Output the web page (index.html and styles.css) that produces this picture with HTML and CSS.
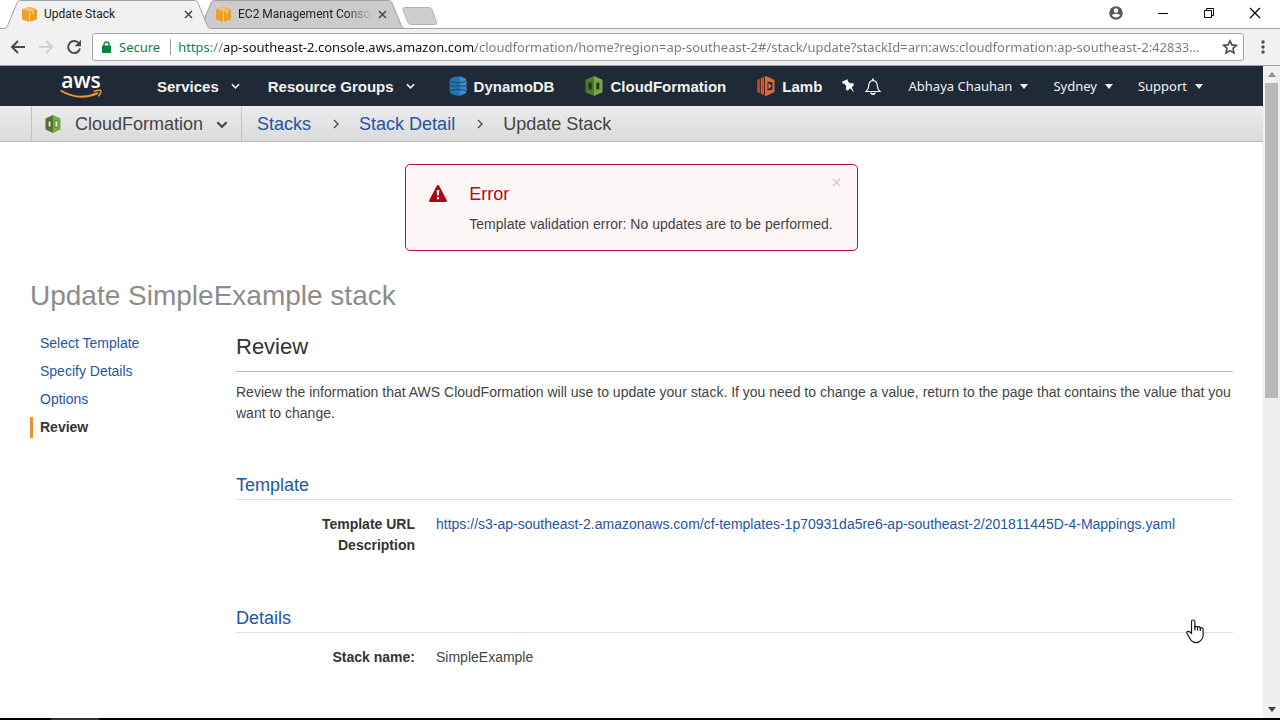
FILE: index.html
```html
<!DOCTYPE html>
<html lang="en">
<head>
<meta charset="utf-8">
<title>Update Stack</title>
<link rel="stylesheet" href="styles.css">
</head>
<body>
<svg class="defs" aria-hidden="true">
  <symbol id="cube" viewBox="0 0 15 15">
    <path d="M0 2.400 7.500 0 15 2.400v10L7.500 15 0 12.400z" fill="#eba028"/>
    <path d="M0 2.400 7.500 0 15 2.400 7.500 5z" fill="#f5b653"/>
    <path d="M7 5v10h1V5z" fill="#fbd48e"/>
    <path d="M3.500 1.300 11 4v3" fill="none" stroke="#fbd89c" stroke-width="1"/>
  </symbol>
  <symbol id="cross" viewBox="0 0 9 9"><path d="M1 1l7 7M8 1 1 8" fill="none" stroke="currentColor" stroke-width="1.600"/></symbol>
  <symbol id="chevron" viewBox="0 0 10 6"><path d="M1 1l4 4 4-4" fill="none" stroke="currentColor" stroke-width="1.800"/></symbol>
  <symbol id="caret" viewBox="0 0 8 5"><path d="M0 0h8L4 5z" fill="currentColor"/></symbol>
  <symbol id="stack" viewBox="0 0 18 20">
    <path d="M9 0 .5 3.800v12.400L9 20z" fill="#4f7a30"/>
    <path d="M9 0l8.500 3.800v12.400L9 20z" fill="#7aa845"/>
    <path d="M2.800 6.200 7.300 5.600v8.800l-4.500-.600z" fill="#3d5f28"/>
    <path d="M4 7.300 6.300 7v6L4 12.700z" fill="var(--hole)"/>
    <path d="M10.700 5.600l4.500.6v7.600l-4.500.6z" fill="#5c8a38"/>
    <path d="M11.700 7l2.300.300v5.400l-2.300.300z" fill="var(--hole)"/>
  </symbol>
</svg>

<div class="browser">
  <div class="tabstrip">
    <div class="tabs">
      <div class="tab tab-active">
        <svg class="tab-shape" viewBox="0 0 206 29"><path d="M0 28.500Q1.500 28.500 2.500 26L12 3q1-2.500 3.500-2.500h174q2.500 0 3.500 2.500l9.500 23q1 2.500 3.500 2.500V29H0z" fill="#f1f1f1"/><path d="M0 28.500Q1.500 28.500 2.500 26L12 3q1-2.500 3.500-2.500h174q2.500 0 3.500 2.500l9.500 23q1 2.500 3.500 2.500" fill="none" stroke="#a0a0a0"/></svg>
        <svg class="favicon"><use href="#cube"/></svg>
        <a class="tab-title" href="#">Update Stack</a>
        <button class="tab-close" aria-label="Close tab"><svg class="x"><use href="#cross"/></svg></button>
      </div>
      <div class="tab">
        <svg class="tab-shape" viewBox="0 0 206 29"><path d="M0 28.500Q1.500 28.500 2.500 26L12 3q1-2.500 3.500-2.500h174q2.500 0 3.500 2.500l9.500 23q1 2.500 3.500 2.500z" fill="#cbcbcb" stroke="#a0a0a0"/></svg>
        <svg class="favicon"><use href="#cube"/></svg>
        <a class="tab-title fade" href="#">EC2 Management Conso</a>
        <button class="tab-close" aria-label="Close tab"><svg class="x"><use href="#cross"/></svg></button>
      </div>
      <button class="new-tab" aria-label="New tab"><svg viewBox="0 0 35 18"><path d="M3 .5h24q2 0 3 2l4.500 12.500q.5 2.500-2 2.500H9q-2 0-3-2L1 3Q.5.500 3 .500z" fill="#cdcdcd" stroke="#b2b2b2"/></svg></button>
    </div>
    <div class="window-buttons">
      <button aria-label="Profile"><svg class="i14" viewBox="0 0 14 14"><circle cx="7" cy="7" r="6.800" fill="#5a5a5a"/><circle cx="7" cy="4.500" r="2.200" fill="#fff"/><path d="M2.800 9Q7 6.300 11.200 9 9.800 11.600 7 11.600T2.800 9z" fill="#fff"/></svg></button>
      <button aria-label="Minimize"><svg class="i12" viewBox="0 0 12 12"><path d="M1 6.500h10" stroke="#000"/></svg></button>
      <button aria-label="Restore"><svg class="i12" viewBox="0 0 12 12"><path d="M1.500 3.500h7v7h-7zM3.500 3V1.500h7v7H9" fill="none" stroke="#000"/></svg></button>
      <button aria-label="Close window"><svg class="i12" viewBox="0 0 12 12"><path d="M1 1l10 10M11 1 1 11" stroke="#000" stroke-width="1.200"/></svg></button>
    </div>
  </div>

  <div class="toolbar">
    <div class="history">
      <button aria-label="Back"><svg class="i16" viewBox="0 0 16 16"><path d="M15 8H2.500M8 2 2 8l6 6" fill="none" stroke="#4a4a4a" stroke-width="2"/></svg></button>
      <button aria-label="Forward"><svg class="i16" viewBox="0 0 16 16"><path d="M1 8h12.500M8 2l6 6-6 6" fill="none" stroke="#d0d0d0" stroke-width="2"/></svg></button>
      <button aria-label="Reload"><svg class="i16" viewBox="0 0 16 16"><path d="M13 4.500A6 6 0 1 0 14 9.500" fill="none" stroke="#4a4a4a" stroke-width="2"/><path d="M15 .8v6.400H8.600z" fill="#4a4a4a"/></svg></button>
    </div>
    <div class="omnibox">
      <svg class="lock" viewBox="0 0 9 12"><path d="M0 4.500h9V12H0z" fill="#0b8043"/><path d="M2 5V3.500a2.500 2.500 0 0 1 5 0V5" fill="none" stroke="#0b8043" stroke-width="1.400"/></svg>
      <span class="secure">Secure</span>
      <input class="url" type="text" aria-label="Address" value="https://ap-southeast-2.console.aws.amazon.com/cloudformation/home?region=ap-southeast-2#/stack/update?stackId=arn:aws:cloudformation:ap-southeast-2:42833...">
      <button aria-label="Bookmark"><svg class="i16" viewBox="0 0 16 16"><path d="M8 1.800l1.900 4.100 4.500.500-3.400 3 1 4.500L8 11.600l-4 2.300 1-4.500-3.400-3 4.500-.500z" fill="none" stroke="#4a4a4a" stroke-width="1.600"/></svg></button>
    </div>
    <button class="menu" aria-label="Menu"><svg viewBox="0 0 4 14"><circle cx="2" cy="2" r="1.700"/><circle cx="2" cy="7" r="1.700"/><circle cx="2" cy="12" r="1.700"/></svg></button>
  </div>

  <div class="viewport">
    <div class="page">
      <header class="nav">
        <a class="logo" href="#" aria-label="AWS home"><span class="logo-text">aws</span><svg class="smile" viewBox="0 0 42 11"><path d="M.5 1.500Q19 12.500 38 4" fill="none" stroke="#f29432" stroke-width="2"/><path d="M33.500 2.500Q39 .8 40.500 1.500T38.500 7.500" fill="none" stroke="#f29432" stroke-width="1.500"/></svg></a>
        <button class="nav-main services">Services <svg class="chev"><use href="#chevron"/></svg></button>
        <button class="nav-main groups">Resource Groups <svg class="chev"><use href="#chevron"/></svg></button>
        <div class="shortcuts">
          <a class="shortcut" href="#"><svg class="service" viewBox="0 0 18 20"><path d="M1 3Q9-2.500 17 3v1.500q1.500 1.500 0 3.500 1 2 0 4 1.500 2 0 3.500V17Q9 22.500 1 17v-1.500q-1.500-1.500 0-3.500-1-2 0-4-1.500-2 0-3.500z" fill="#2673b5"/><path d="M11 .200 17 3v1.500q1.500 1.500 0 3.500 1 2 0 4 1.500 2 0 3.500V17l-6 2.800z" fill="#3f8ccb"/><path d="M1 5.500q8 2.500 16 0M1 10h16M1 14.500q8-2.500 16 0" fill="none" stroke="#194668" stroke-width="1"/></svg>DynamoDB</a>
          <a class="shortcut" href="#"><svg class="service"><use href="#stack"/></svg>CloudFormation</a>
          <a class="shortcut" href="#"><svg class="service" viewBox="0 0 18 20"><path d="M9 0l8.500 4v12L9 20 .5 16V4z" fill="#dd6b37"/><path d="M.5 4 3 2.800v14.400L.5 16zM5 2l1.500-.700v17.400L5 18z" fill="#b8491f"/><path d="M3.500 2.600v14.800M7.500.800v18.400" stroke="#4a2a26"/><path d="M10.500 5.500l5 1v7l-5 1z" fill="#1f2a36"/><path d="M11.500 7l3 3-3 3z" fill="#f08350"/></svg>Lamb</a>
        </div>
        <div class="nav-tools">
          <button aria-label="Pin shortcuts"><svg class="i14" viewBox="0 0 14 14"><path d="M3.500 1.500 6.500.2l.8 2.800 2.700 1.500 2.400-.5.400 2.400-2.100 1.600L13 13.500l-4-4.200-2.400 2.400L4.800 10.200l.4-3.300L3.600 5 1.600 4.500 1 2.700z" fill="#fff"/></svg></button>
          <button aria-label="Notifications"><svg class="bell" viewBox="0 0 16 17"><path d="M1 13.500q2.500-2 2.700-5.500Q3.700 3 8 2.500 12.300 3 12.300 8q.2 3.500 2.700 5.500z" fill="none" stroke="#fff" stroke-width="1.200"/><path d="M8 2.500V.5M6 14.500a2 1.600 0 0 0 4 0" fill="none" stroke="#fff" stroke-width="1.600"/></svg></button>
        </div>
        <nav class="account">
          <button>Abhaya Chauhan <svg class="caret"><use href="#caret"/></svg></button>
          <button>Sydney <svg class="caret"><use href="#caret"/></svg></button>
          <button>Support <svg class="caret"><use href="#caret"/></svg></button>
        </nav>
      </header>

      <nav class="crumbs" aria-label="Breadcrumb">
        <button class="service-menu"><svg class="service-small"><use href="#stack"/></svg>CloudFormation <svg class="chev-large"><use href="#chevron"/></svg></button>
        <a href="#">Stacks</a>
        <svg class="sep" viewBox="0 0 6 10"><path d="M1 1l4 4-4 4" fill="none" stroke="#444" stroke-width="1.300"/></svg>
        <a href="#">Stack Detail</a>
        <svg class="sep" viewBox="0 0 6 10"><path d="M1 1l4 4-4 4" fill="none" stroke="#444" stroke-width="1.300"/></svg>
        <span>Update Stack</span>
      </nav>

      <section class="alert" role="alert">
        <svg class="warning" viewBox="0 0 18 17"><path d="M9 0q.8 0 1.200.8l7.600 14.400q.6 1.800-1.300 1.800h-15Q-.4 17 .2 15.200L7.800.800Q8.200 0 9 0z" fill="#b10610"/><path d="M7.700 5h2.600l-.4 5.500H8.100zM7.900 12h2.200v2.200H7.900z" fill="#fff"/></svg>
        <div class="alert-body">
          <h2>Error</h2>
          <p>Template validation error: No updates are to be performed.</p>
        </div>
        <button class="dismiss" aria-label="Dismiss"><svg class="x"><use href="#cross"/></svg></button>
      </section>

      <main class="content">
        <h1>Update SimpleExample stack</h1>
        <div class="columns">
          <nav class="steps" aria-label="Steps">
            <a href="#">Select Template</a>
            <a href="#">Specify Details</a>
            <a href="#">Options</a>
            <span class="current">Review</span>
          </nav>
          <div class="review">
            <h2>Review</h2>
            <p>Review the information that AWS CloudFormation will use to update your stack. If you need to change a value, return to the page that contains the value that you want to change.</p>
            <section>
              <h3>Template</h3>
              <dl>
                <dt>Template URL</dt><dd><a href="#">https://s3-ap-southeast-2.amazonaws.com/cf-templates-1p70931da5re6-ap-southeast-2/201811445D-4-Mappings.yaml</a></dd>
                <dt>Description</dt><dd></dd>
              </dl>
            </section>
            <section>
              <h3>Details</h3>
              <dl><dt>Stack name:</dt><dd>SimpleExample</dd></dl>
            </section>
          </div>
        </div>
      </main>
    </div>
    <div class="scrollbar">
      <svg class="caret up"><use href="#caret"/></svg>
      <div class="track"><div class="thumb"></div></div>
      <svg class="caret down"><use href="#caret"/></svg>
    </div>
  </div>
  <div class="taskbar"><div class="taskbar-item"></div></div>
</div>
<svg class="pointer" viewBox="0 0 18 25"><path d="M5.500 13V3q0-2 1.700-2t1.700 2v5q1-1.200 2.700 0 1.500-.8 2.500.6 2.700-.4 3 1.600v6q0 3-2 5-1.800 2.500-5 2.500-3.500 0-5.600-3.200L1 14.200q-.6-1.800 1.200-1.900 1.500 0 3.300 2z" fill="#fff" stroke="#1c1824" stroke-width="1.200"/><path d="M8.900 7v4.500M11.600 8v3.500M14.300 9v3" stroke="#1c1824" stroke-width="1.200"/></svg>
</body>
</html>
```

FILE: styles.css
```css
* { box-sizing: border-box; }
body {
  margin: 0;
  font-family: "Liberation Sans", Arial, sans-serif;
  font-size: 14px;
  line-height: 21px;
  color: #444;
  background: #fff;
}
h1, h2, h3, p, dl, dd { margin: 0; font-weight: normal; }
a { color: #1f55a5; text-decoration: none; }
button {
  display: flex;
  align-items: center;
  padding: 0;
  border: 0;
  background: none;
  color: inherit;
  font: inherit;
  white-space: nowrap;
}
svg { display: block; flex: none; }
.defs { position: absolute; width: 0; height: 0; }
.browser { display: flex; flex-direction: column; height: 100vh; overflow: hidden; }
.i12 { width: 12px; height: 12px; }
.i14 { width: 14px; height: 14px; }
.i16 { width: 16px; height: 16px; }
.x { width: 9px; height: 9px; }

.tabstrip {
  display: flex;
  justify-content: space-between;
  flex: none;
  height: 29px;
  border-bottom: 1px solid #a5a5a5;
  font-family: Roboto, "Noto Sans", sans-serif;
  font-size: 12px;
  color: #222;
}
.tabs { display: flex; align-items: flex-start; padding-left: 5px; }
.tab {
  position: relative;
  display: flex;
  align-items: center;
  width: 206px;
  height: 29px;
  padding: 0 18px 0 17px;
  margin-right: -12px;
}
.tab-active { z-index: 1; }
.tab-shape { position: absolute; inset: 0; z-index: -1; width: 206px; height: 29px; }
.tab:not(.tab-active) { z-index: 0; }
.favicon { width: 15px; height: 15px; }
.tab-title {
  flex: 1;
  min-width: 0;
  margin: 0 6px 0 7px;
  overflow: hidden;
  white-space: nowrap;
  color: #222;
}
.fade { -webkit-mask-image: linear-gradient(90deg, #000 80%, transparent); mask-image: linear-gradient(90deg, #000 80%, transparent); }
.tab-close { color: #4c4c4c; }
.new-tab { margin: 7px 0 0 9px; }
.new-tab svg { width: 35px; height: 18px; }
.window-buttons { display: flex; align-items: center; gap: 34px; padding: 0 19px 2px 0; }

.toolbar {
  display: flex;
  align-items: center;
  flex: none;
  height: 37px;
  padding: 0 15px 0 10px;
  background: #f1f1f1;
  border-bottom: 1px solid #a0a0a0;
}
.history { display: flex; gap: 12px; margin-right: 10px; }
.omnibox {
  display: flex;
  align-items: center;
  flex: 1;
  height: 28px;
  padding: 0 5px 0 9px;
  background: #fff;
  border: 1px solid #a8a8a8;
  border-radius: 3px;
  font-family: "Noto Sans", sans-serif;
  font-size: 13px;
}
.lock { width: 9px; height: 12px; }
.secure { margin-left: 8px; padding-right: 10px; line-height: 16px; color: #0b8043; border-right: 1px solid #a0a0a0; }
.url {
  flex: 1;
  min-width: 0;
  margin: 0 8px 0 7px;
  padding: 0;
  border: 0;
  outline: 0;
  font: inherit;
  color: transparent;
  background: linear-gradient(90deg, #0b8043 31px, #777 31px, #777 45px, #111 45px, #111 297px, #777 297px);
  -webkit-background-clip: text;
  background-clip: text;
}
.menu { margin-left: 17px; }
.menu svg { width: 4px; height: 14px; fill: #4c4c4c; }

.viewport { display: flex; flex: 1; min-height: 0; }
.page { flex: 1; min-width: 0; overflow: hidden; }
.nav {
  display: flex;
  align-items: center;
  height: 40px;
  padding: 0 60px;
  background: #1f2a36;
  color: #f2f2f2;
  --hole: #1f2a36;
}
.logo { display: flex; flex-direction: column; align-items: center; width: 42px; margin-right: 55px; padding-bottom: 2px; color: #fff; }
.logo-text { font-family: "Open Sans", sans-serif; font-size: 21px; font-weight: 600; line-height: 18px; }
.smile { width: 42px; height: 11px; }
.nav-main, .shortcut { font-size: 15px; font-weight: bold; }
.services { margin-right: 28px; }
.groups { margin-right: 34px; }
.chev { width: 9px; height: 6px; margin-left: 12px; }
.shortcuts { display: flex; gap: 31px; }
.shortcut { display: flex; align-items: center; gap: 7px; color: #f2f2f2; }
.service { width: 18px; height: 20px; }
.nav-tools { display: flex; align-items: center; gap: 10px; margin-left: 19px; }
.bell { width: 16px; height: 17px; }
.account { display: flex; gap: 25px; margin-left: auto; font-family: "Noto Sans", sans-serif; font-size: 13px; }
.caret { width: 8px; height: 5px; margin-left: 8px; }

.crumbs {
  display: flex;
  align-items: center;
  height: 36px;
  padding: 1px 0 0 31px;
  background: linear-gradient(#ececec, #dadada);
  border-bottom: 1px solid #bbb;
  font-size: 18px;
  --hole: #e4e4e4;
}
.service-menu {
  height: 100%;
  margin-right: 15px;
  padding: 0 13px;
  border: solid #c2c2c2;
  border-width: 0 1px;
}
.service-small { width: 16px; height: 18px; margin-right: 14px; }
.chev-large { width: 12px; height: 7px; margin-left: 13px; }
.sep { width: 6px; height: 10px; margin: 0 20px 0 22px; }

.alert {
  display: flex;
  width: fit-content;
  margin: 22px auto 28px;
  padding: 17px 16px 16px 23px;
  background: #fcf7f6;
  border: 1px solid #b5123a;
  border-radius: 5px;
}
.warning { width: 18px; height: 17px; margin: 3px 22px 0 0; }
.alert h2 { font-size: 18px; line-height: 24px; margin-bottom: 8px; color: #b10a20; }
.alert p { line-height: 20px; }
.dismiss { align-self: flex-start; margin: -4px 0 0 -1px; color: #f0bdc6; }

.content { padding: 0 30px; }
h1 { margin-bottom: 20px; font-size: 28px; line-height: 34px; color: #8c8c8c; }
.columns { display: grid; grid-template-columns: 186px 1fr; gap: 20px; }
.steps { display: flex; flex-direction: column; gap: 7px; }
.steps > * { padding-left: 7px; border-left: 3px solid transparent; }
.steps .current { border-color: #e8912d; color: #333; font-weight: bold; }
.review h2 {
  margin-bottom: 10px;
  padding-bottom: 10px;
  border-bottom: 1px solid #bbb;
  font-size: 22px;
  line-height: 28px;
  color: #333;
}
.review h3 {
  margin: 49px 0 14px;
  padding-bottom: 2px;
  border-bottom: 1px solid #ddd;
  font-size: 18px;
  line-height: 24px;
  color: #1f55a5;
}
.review section + section { padding-top: 1px; }
dl { display: grid; grid-template-columns: 179px 1fr; column-gap: 21px; }
dt { text-align: right; font-weight: bold; color: #333; }

.scrollbar {
  display: flex;
  flex-direction: column;
  align-items: center;
  flex: none;
  width: 17px;
  padding: 6px 0;
  background: #efefef;
}
.scrollbar .caret { margin: 0; color: #404040; }
.scrollbar .up { transform: rotate(180deg); color: #8f8f8f; }
.track { flex: 1; width: 13px; margin: 6px 0; }
.thumb { height: 51%; background: #b9b9b9; }
.taskbar { flex: none; height: 2px; padding-left: 51px; background: #000; }
.taskbar-item { width: 48px; height: 2px; background: #333; }
.pointer { position: absolute; left: 1186px; top: 619px; width: 18px; height: 25px; }
```
